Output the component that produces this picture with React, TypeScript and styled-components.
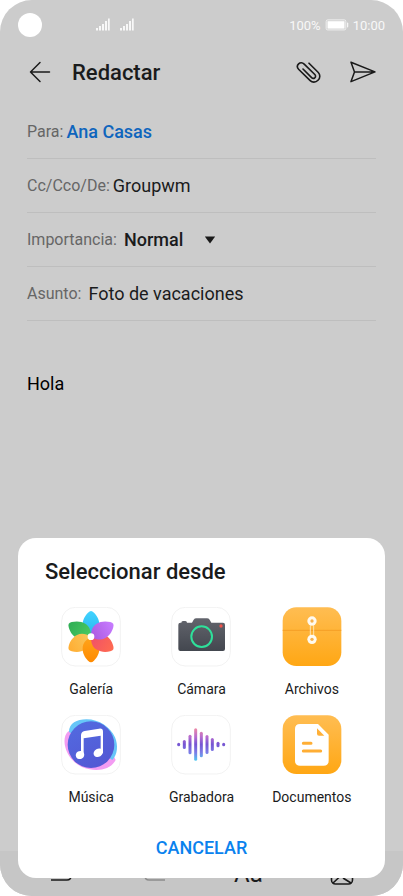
import React from "react";
import styled, { createGlobalStyle, css } from "styled-components";

const GlobalStyle = createGlobalStyle`
  *, *::before, *::after { box-sizing: border-box; }
  body { margin: 0; background: #fff; font-family: Roboto, sans-serif; color: #1a1b1c; }
  button, input, select, textarea { font: inherit; color: inherit; }
`;

const Screen = styled.div`
  position: relative;
  display: flex;
  flex-direction: column;
  min-height: 100vh;
  overflow: hidden;
  border-radius: 32px;
  background: #ccc;
`;

const StatusBar = styled.div`
  display: flex;
  align-items: center;
  height: 50px;
  padding: 0 18px;
  color: #f8f8f8;
  font-size: 13px;
`;

const CameraHole = styled.span`
  width: 24px;
  height: 24px;
  border-radius: 50%;
  background: #fff;
`;

const Signals = styled.div`
  display: flex;
  flex: 1;
  gap: 10px;
  padding-left: 54px;
`;

const StatusRight = styled.div`
  display: flex;
  align-items: center;
  gap: 4px;
`;

const Header = styled.header`
  display: flex;
  align-items: center;
  height: 45px;
  padding: 0 26px 0 27px;
`;

const IconButton = styled.button`
  display: grid;
  place-items: center;
  padding: 0;
  border: 0;
  background: none;
  color: #1a1a1a;
`;

const PageTitle = styled.h1`
  flex: 1;
  margin: 0 0 0 19px;
  font-size: 22px;
  line-height: 28px;
  font-weight: 500;
`;

const HeaderActions = styled.div`
  display: flex;
  gap: 28px;
`;

const Form = styled.form`
  display: flex;
  flex: 1;
  flex-direction: column;
  padding: 10px 27px 0;
`;

const Field = styled.div<{ $gap?: number }>`
  display: flex;
  align-items: center;
  gap: ${({ $gap = 3 }) => $gap}px;
  height: 54px;
  border-bottom: 1px solid #bebebe;
`;

const FieldLabel = styled.label`
  color: #666;
  font-size: 16px;
`;

const control = css`
  min-width: 0;
  padding: 0;
  border: 0;
  outline: 0;
  background: none;
  font-size: 18px;
  line-height: 24px;
`;

const TextInput = styled.input<{ $contact?: boolean }>`
  ${control}
  flex: 1;
  ${({ $contact }) => $contact && "color: #0e65bd; font-weight: 500;"}
`;

const SelectBox = styled.div`
  display: grid;
  grid-template-columns: 80px 12px;
  align-items: center;
`;

const Select = styled.select`
  ${control}
  grid-area: 1 / 1 / 2 / 3;
  appearance: none;
  font-weight: 500;
`;

const Arrow = styled.svg`
  grid-area: 1 / 2;
  pointer-events: none;
`;

const Message = styled.textarea`
  ${control}
  flex: 1;
  margin-top: 51px;
  resize: none;
  color: #000;
`;

const Toolbar = styled.div`
  display: grid;
  grid-template-columns: repeat(4, 1fr);
  align-items: start;
  justify-items: center;
  height: 45px;
  padding: 10px 14px 0;
  background: #c6c6c6;
`;

const FontLabel = styled.span`
  font-size: 24px;
  line-height: 26px;
`;

const Dialog = styled.section`
  position: absolute;
  right: 18px;
  bottom: 18px;
  left: 18px;
  display: flex;
  flex-direction: column;
  padding: 20px 18px 11px;
  border-radius: 18px;
  background: #fff;
`;

const DialogTitle = styled.h2`
  margin: 0 9px 21px;
  font-size: 22px;
  line-height: 28px;
  font-weight: 500;
`;

const SourceGrid = styled.div`
  display: grid;
  grid-template-columns: repeat(3, 1fr);
  row-gap: 16px;
`;

const SourceButton = styled.button`
  display: flex;
  flex-direction: column;
  align-items: center;
  gap: 12px;
  padding: 0;
  border: 0;
  background: none;
  font-size: 14px;
  line-height: 20px;
`;

const CancelButton = styled.button`
  align-self: center;
  height: 40px;
  margin-top: 20px;
  padding: 0 20px;
  border: 0;
  background: none;
  color: #0a82ee;
  font-size: 18px;
  font-weight: 500;
`;

function Signal() {
  return (
    <svg width="14" height="14" viewBox="0 0 14 14" fill="#f8f8f8" aria-hidden="true">
      <rect x="0" y="10" width="2" height="2.5" />
      <rect x="3" y="8" width="2" height="4.5" />
      <rect x="6" y="6" width="2" height="6.5" />
      <rect x="9" y="3" width="2" height="9.5" />
      <rect x="12" y="0.5" width="1.7" height="12" />
    </svg>
  );
}

function Battery() {
  return (
    <svg width="24" height="12" viewBox="0 0 24 12" aria-hidden="true">
      <rect x="1.2" y="0.9" width="19.6" height="10" rx="1.5" fill="none" stroke="#f0f0f0" />
      <rect x="2.5" y="2.2" width="17" height="7.4" fill="#fff" />
      <path d="M22.2 3.5q1 0 1 1v3q0 1-1 1z" fill="#fff" />
    </svg>
  );
}

function Tile({ fill = "#fff", children }: { fill?: string; children: React.ReactNode }) {
  return (
    <svg width="60" height="60" viewBox="18 21 180 180" aria-hidden="true">
      <defs>
        <linearGradient id="amber" x1="0" y1="0" x2="0" y2="1">
          <stop offset="0" stopColor="#ffbd52" />
          <stop offset="1" stopColor="#ffa714" />
        </linearGradient>
      </defs>
      <rect x="20" y="22" width="176" height="176" rx="41" fill={fill} stroke={fill === "#fff" ? "#efefef" : "none"} strokeWidth="2.5" />
      {children}
    </svg>
  );
}

const PETALS: [number, string, string][] = [
  [0, "#42d3ff", "#26b5ee"],
  [300, "#2fae55", "#4ccb62"],
  [240, "#ffad32", "#f9c75c"],
  [180, "#ff8a00", "#ffa51c"],
  [120, "#ff6b50", "#f05068"],
  [60, "#c77cff", "#aa58df"],
];

function GalleryIcon() {
  return (
    <Tile>
      <defs>
        {PETALS.map(([angle, from, to]) => (
          <linearGradient key={angle} id={`petal${angle}`} x1="0" y1="0" x2="0" y2="1">
            <stop offset="0" stopColor={from} />
            <stop offset="1" stopColor={to} />
          </linearGradient>
        ))}
      </defs>
      {PETALS.map(([angle]) => (
        <path
          key={angle}
          d="M108 33Q112 33 117 38C127 48 134 62 133 76C133 90 124 101 108 110C92 101 83 90 83 76C82 62 89 48 99 38Q104 33 108 33Z"
          fill={`url(#petal${angle})`}
          transform={`rotate(${angle} 108 110)`}
        />
      ))}
      <circle cx="108" cy="110" r="10" fill="#fff" />
    </Tile>
  );
}

function CameraIcon() {
  return (
    <Tile>
      <defs>
        <linearGradient id="camera" x1="0" y1="0" x2="0" y2="1">
          <stop offset="0" stopColor="#62646c" />
          <stop offset="1" stopColor="#43474f" />
        </linearGradient>
      </defs>
      <path d="M49 68Q49 63 54 63H61Q66 63 66 68H81L86 59Q89 55 94 55H126Q131 55 134 59L139 68H174Q180 68 180 74V147Q180 153 174 153H46Q40 153 40 147V74Q40 68 46 68Z" fill="url(#camera)" />
      <circle cx="110" cy="110" r="31" fill="none" stroke="#2ee09a" strokeWidth="6" />
      <circle cx="168" cy="78" r="5" fill="#f0524b" />
    </Tile>
  );
}

function ArchiveIcon() {
  return (
    <Tile fill="url(#amber)">
      <path d="M20 91H196" stroke="#f39a22" strokeWidth="2.5" />
      <path d="M103 68V114M113 68V114" stroke="#ffe3ad" strokeWidth="3" />
      <circle cx="108" cy="63" r="14" fill="#fffaf0" />
      <circle cx="108" cy="118" r="14" fill="#fffaf0" />
      <circle cx="108" cy="63" r="5" fill="#f6b14d" />
      <circle cx="108" cy="118" r="5" fill="#f6b14d" />
    </Tile>
  );
}

function MusicIcon() {
  return (
    <Tile>
      <defs>
        <linearGradient id="disc" x1="0.2" y1="0" x2="0.7" y2="1">
          <stop offset="0" stopColor="#526ae0" />
          <stop offset="1" stopColor="#5358d4" />
        </linearGradient>
      </defs>
      <path d="M40 70C28 80 26 100 31 118C38 148 66 178 104 184C140 190 170 180 182 156L150 90Z" fill="#f39cf2" />
      <path d="M42 72C42 46 66 34 94 34C134 34 166 58 180 88C190 112 188 140 172 156L108 110Z" fill="#66c6f8" />
      <circle cx="108" cy="110" r="70" fill="url(#disc)" />
      <path d="M78 140V82Q78 71 89 69L132 62Q144 60 144 71V134H137V83L86 91V140Z" fill="#fff" />
      <ellipse cx="75" cy="141" rx="13" ry="12" fill="#fff" transform="rotate(-30 75 141)" />
      <ellipse cx="130" cy="134" rx="15" ry="12" fill="#fff" transform="rotate(-30 130 134)" />
    </Tile>
  );
}

const BARS = [
  [41, 104, 115],
  [58, 96, 123],
  [75, 80, 139],
  [92, 61, 158],
  [109, 71, 148],
  [126, 81, 138],
  [142, 90, 129],
  [159, 101, 118],
  [176, 104, 115],
];

function RecorderIcon() {
  return (
    <Tile>
      <defs>
        <linearGradient id="wave" gradientUnits="userSpaceOnUse" x1="0" y1="60" x2="0" y2="158">
          <stop offset="0" stopColor="#f08aa4" />
          <stop offset="0.28" stopColor="#b56bd0" />
          <stop offset="0.5" stopColor="#7555d2" />
          <stop offset="0.75" stopColor="#7c7ce6" />
          <stop offset="1" stopColor="#50c8f0" />
        </linearGradient>
      </defs>
      {BARS.map(([x, top, bottom]) => (
        <rect key={x} x={x - 4.5} y={top} width="9" height={bottom - top} rx="4.5" fill="url(#wave)" />
      ))}
    </Tile>
  );
}

function DocumentIcon() {
  return (
    <Tile fill="url(#amber)">
      <path d="M72 48H126L158 80V158Q158 173 143 173H72Q57 173 57 158V63Q57 48 72 48Z" fill="#fff" />
      <path d="M123 61L145 83H129Q123 83 123 77Z" fill="#ffb038" />
      <path d="M82 106H105M82 129H134" stroke="#ffae34" strokeWidth="9" strokeLinecap="round" />
    </Tile>
  );
}

const SOURCES = [
  { name: "Galería", Icon: GalleryIcon },
  { name: "Cámara", Icon: CameraIcon },
  { name: "Archivos", Icon: ArchiveIcon },
  { name: "Música", Icon: MusicIcon },
  { name: "Grabadora", Icon: RecorderIcon },
  { name: "Documentos", Icon: DocumentIcon },
];

export default function App() {
  return (
    <Screen>
      <GlobalStyle />
      <StatusBar>
        <CameraHole />
        <Signals>
          <Signal />
          <Signal />
        </Signals>
        <StatusRight>
          <span>100%</span>
          <Battery />
          <span>10:00</span>
        </StatusRight>
      </StatusBar>

      <Header>
        <IconButton type="button" aria-label="Atrás">
          <svg width="26" height="24" viewBox="0 0 26 24" fill="none" stroke="currentColor" strokeWidth="1.5" strokeLinecap="round" strokeLinejoin="round">
            <path d="M22.5 11H3.5M13 1.5L3.5 11L13 20.5" />
          </svg>
        </IconButton>
        <PageTitle>Redactar</PageTitle>
        <HeaderActions>
          <IconButton type="button" aria-label="Adjuntar">
            <svg width="26" height="26" viewBox="0 0 26 26" fill="none" stroke="currentColor" strokeWidth="1.6" strokeLinecap="round" strokeLinejoin="round">
              <path d="M14 3.2L23.3 12.5C25.2 14.4 25.5 17.8 23 20.3C20.5 22.8 17.1 22.5 15.2 20.6L3.8 9.5C2.1 7.8 2.1 5.4 3.6 3.9C5.1 2.4 7.5 2.4 9.2 4.1L19.8 14.5C20.8 15.5 20.8 17 19.8 17.8C18.8 18.7 17.5 18.5 16.6 17.6L8 9" />
            </svg>
          </IconButton>
          <IconButton type="button" aria-label="Enviar">
            <svg width="28" height="26" viewBox="0 0 28 26" fill="none" stroke="currentColor" strokeWidth="1.5" strokeLinejoin="round">
              <path d="M2 2.2L26 11.9L2 21.6L5.5 11.9ZM5.5 11.9H26" />
            </svg>
          </IconButton>
        </HeaderActions>
      </Header>

      <Form>
        <Field>
          <FieldLabel htmlFor="to">Para:</FieldLabel>
          <TextInput id="to" $contact defaultValue="Ana Casas" />
        </Field>
        <Field>
          <FieldLabel htmlFor="from">Cc/Cco/De:</FieldLabel>
          <TextInput id="from" defaultValue="Groupwm" />
        </Field>
        <Field $gap={7}>
          <FieldLabel htmlFor="priority">Importancia:</FieldLabel>
          <SelectBox>
            <Select id="priority" defaultValue="Normal">
              <option>Normal</option>
            </Select>
            <Arrow width="12" height="8" viewBox="0 0 12 8" fill="#1a1a1a" aria-hidden="true">
              <path d="M0.8 0.5H11.2L6 7.5Z" />
            </Arrow>
          </SelectBox>
        </Field>
        <Field $gap={7}>
          <FieldLabel htmlFor="subject">Asunto:</FieldLabel>
          <TextInput id="subject" defaultValue="Foto de vacaciones" />
        </Field>
        <Message aria-label="Mensaje" defaultValue="Hola" />
      </Form>

      <Toolbar>
        <svg width="24" height="24" viewBox="0 0 24 24" fill="none" stroke="#1a1a1a" strokeWidth="1.5" aria-hidden="true">
          <path d="M2 19H18Q22 19 22 15V5H2" />
        </svg>
        <svg width="24" height="24" viewBox="0 0 24 24" fill="none" stroke="#8c8c8c" strokeWidth="1.5" aria-hidden="true">
          <path d="M22 19H6Q2 19 2 15V5H22" />
        </svg>
        <FontLabel>Aa</FontLabel>
        <svg width="24" height="24" viewBox="0 0 24 24" fill="none" stroke="#1a1a1a" strokeWidth="1.6" aria-hidden="true">
          <rect x="1.5" y="2" width="21" height="21" rx="4" />
          <path d="M3 22L10 15.5M13 17L21 22" />
        </svg>
      </Toolbar>

      <Dialog role="dialog" aria-labelledby="source-title">
        <DialogTitle id="source-title">Seleccionar desde</DialogTitle>
        <SourceGrid>
          {SOURCES.map(({ name, Icon }) => (
            <SourceButton key={name} type="button">
              <Icon />
              <span>{name}</span>
            </SourceButton>
          ))}
        </SourceGrid>
        <CancelButton type="button">CANCELAR</CancelButton>
      </Dialog>
    </Screen>
  );
}
